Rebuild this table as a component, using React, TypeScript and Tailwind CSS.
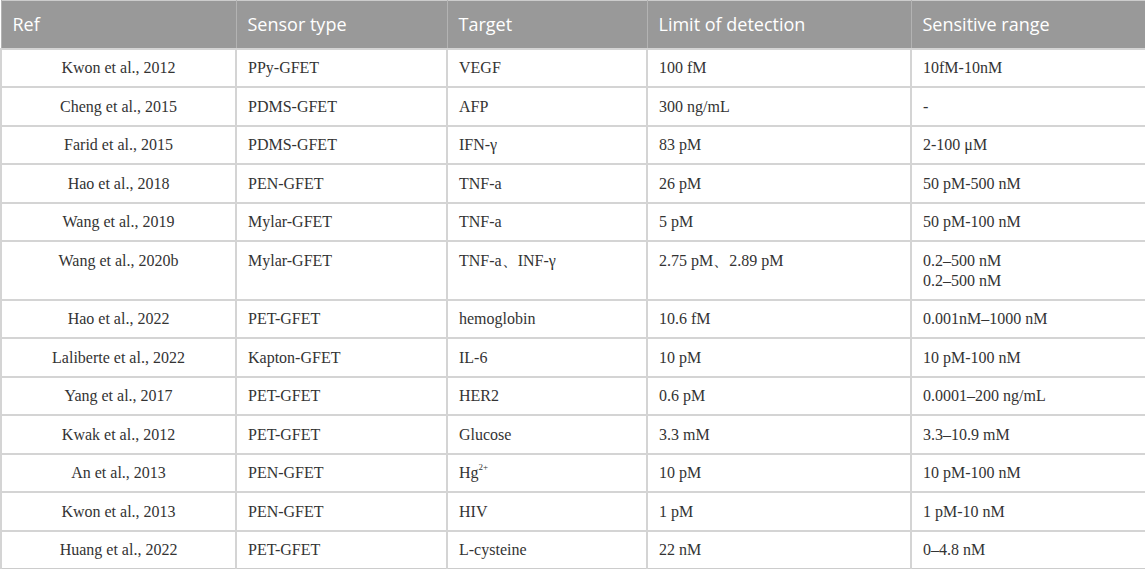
import React from "react";

const rows: [string, string, React.ReactNode, string, React.ReactNode][] = [
  ["Kwon et al., 2012", "PPy-GFET", "VEGF", "100 fM", "10fM-10nM"],
  ["Cheng et al., 2015", "PDMS-GFET", "AFP", "300 ng/mL", "-"],
  ["Farid et al., 2015", "PDMS-GFET", "IFN-γ", "83 pM", "2-100 μM"],
  ["Hao et al., 2018", "PEN-GFET", "TNF-a", "26 pM", "50 pM-500 nM"],
  ["Wang et al., 2019", "Mylar-GFET", "TNF-a", "5 pM", "50 pM-100 nM"],
  [
    "Wang et al., 2020b",
    "Mylar-GFET",
    "TNF-a、INF-γ",
    "2.75 pM、2.89 pM",
    <>
      0.2–500 nM
      <br />
      0.2–500 nM
    </>,
  ],
  ["Hao et al., 2022", "PET-GFET", "hemoglobin", "10.6 fM", "0.001nM–1000 nM"],
  ["Laliberte et al., 2022", "Kapton-GFET", "IL-6", "10 pM", "10 pM-100 nM"],
  ["Yang et al., 2017", "PET-GFET", "HER2", "0.6 pM", "0.0001–200 ng/mL"],
  ["Kwak et al., 2012", "PET-GFET", "Glucose", "3.3 mM", "3.3–10.9 mM"],
  [
    "An et al., 2013",
    "PEN-GFET",
    <>
      Hg<sup className="text-[9px] relative -top-[2px] align-super leading-none">2+</sup>
    </>,
    "10 pM",
    "10 pM-100 nM",
  ],
  ["Kwon et al., 2013", "PEN-GFET", "HIV", "1 pM", "1 pM-10 nM"],
  ["Huang et al., 2022", "PET-GFET", "L-cysteine", "22 nM", "0–4.8 nM"],
];

export default function App() {
  const head = ["Ref", "Sensor type", "Target", "Limit of detection", "Sensitive range"];
  return (
    <div className="w-[1145px] h-[569px] bg-white overflow-hidden">
      <table className="w-[1145px] table-fixed border-collapse border border-[#cccccc]">
        <colgroup>
          <col className="w-[235px]" />
          <col className="w-[211px]" />
          <col className="w-[200px]" />
          <col className="w-[264px]" />
          <col className="w-[235px]" />
        </colgroup>
        <thead>
          <tr className="bg-[#999999] h-[48px]">
            {head.map((h) => (
              <th
                key={h}
                className="text-left font-normal text-white text-[18px] leading-[24px] px-[11px] py-0 border-x border-[#b3b3b3] font-['Open_Sans',sans-serif]"
              >
                {h}
              </th>
            ))}
          </tr>
        </thead>
        <tbody className="font-['Liberation_Serif',serif] text-[16px] leading-[20px] text-[#333333]">
          {rows.map((r, i) => (
            <tr key={i} className="border-t-2 border-[#d4d4d4]">
              {r.map((c, j) => (
                <td
                  key={j}
                  className={`align-top pt-[8.5px] pb-[8px] px-[11px] border-x-2 border-[#d4d4d4] ${
                    j === 0 ? "text-center" : "text-left"
                  }`}
                >
                  {c}
                </td>
              ))}
            </tr>
          ))}
        </tbody>
      </table>
    </div>
  );
}
